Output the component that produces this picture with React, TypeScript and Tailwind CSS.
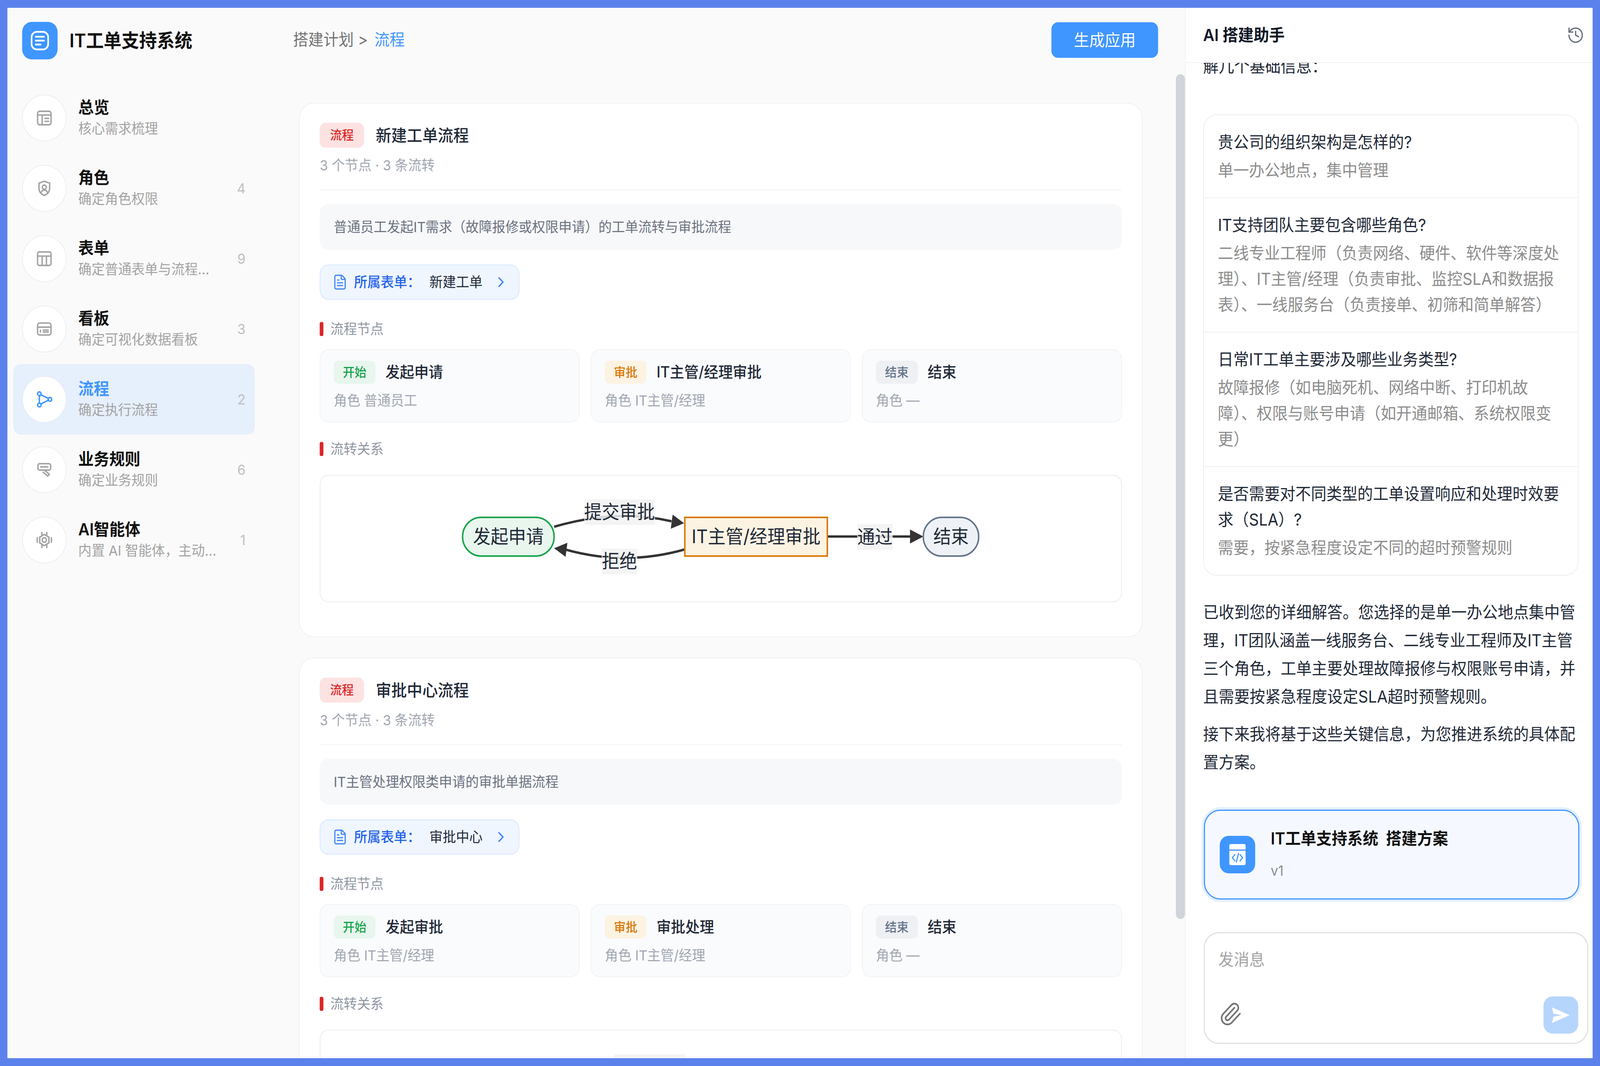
import React from "react";
import { ChevronRight, FileText, History, Paperclip } from "lucide-react";

const stroke = { fill: "none", stroke: "currentColor", strokeWidth: 2, strokeLinecap: "round" as const, strokeLinejoin: "round" as const };

function IconOverview() {
  return (
    <svg width="46" height="46" viewBox="0 0 24 24" {...stroke}>
      <rect x="2.500" y="3" width="19" height="18" rx="3" />
      <path d="M2.500 8h19M9 8v13M13 12.500h5M13 16.500h5" />
    </svg>
  );
}
function IconRole() {
  return (
    <svg width="46" height="46" viewBox="0 0 24 24" {...stroke}>
      <path d="M12 2.500l7.500 2.600v7c0 4.400-3.200 7.600-7.500 9.400-4.300-1.800-7.500-5-7.500-9.400v-7L12 2.500z" />
      <circle cx="12" cy="10.500" r="2.800" />
      <path d="M7.600 17.400c.8-2 2.400-3.200 4.400-3.200s3.600 1.200 4.400 3.200" />
    </svg>
  );
}
function IconForm() {
  return (
    <svg width="46" height="46" viewBox="0 0 24 24" {...stroke}>
      <rect x="2.500" y="3" width="19" height="18" rx="2.500" />
      <path d="M2.500 8.500h19M9 8.500V21M15 8.500V21" />
    </svg>
  );
}
function IconBoard() {
  return (
    <svg width="46" height="46" viewBox="0 0 24 24" {...stroke}>
      <rect x="2.500" y="4" width="19" height="16" rx="3" />
      <path d="M2.500 9.500h19M6.500 13.500v2.500M10.500 13.500h7M10.500 16h7" />
    </svg>
  );
}
function IconFlow() {
  return (
    <svg width="46" height="46" viewBox="0 0 24 24" {...stroke}>
      <circle cx="5" cy="4.500" r="2.500" />
      <circle cx="5" cy="19.500" r="2.500" />
      <circle cx="20" cy="12" r="2.500" />
      <path d="M5 7v10M7.200 5.800l10.500 5M7.200 18.200l10.500-5" />
    </svg>
  );
}
function IconRule() {
  return (
    <svg width="46" height="46" viewBox="0 0 24 24" {...stroke}>
      <rect x="3" y="4" width="18" height="8.500" rx="2.500" />
      <path d="M7 8.200h10M12 12.500l7 5.500-2 2.500-6.500-5" />
    </svg>
  );
}
function IconAgent() {
  return (
    <svg width="46" height="46" viewBox="0 0 24 24" {...stroke}>
      <path d="M12 4.500l6.500 3.700v7.600L12 19.500l-6.500-3.700V8.200L12 4.500z" />
      <circle cx="12" cy="12" r="3" />
      <path d="M8.500 2v3M15.500 2v3M8.500 19v3M15.500 19v3M2 9v6M22 9v6" />
    </svg>
  );
}

const navItems = [
  { title: "总览", sub: "核心需求梳理", count: "", Icon: IconOverview },
  { title: "角色", sub: "确定角色权限", count: "4", Icon: IconRole },
  { title: "表单", sub: "确定普通表单与流程...", count: "9", Icon: IconForm },
  { title: "看板", sub: "确定可视化数据看板", count: "3", Icon: IconBoard },
  { title: "流程", sub: "确定执行流程", count: "2", Icon: IconFlow, active: true },
  { title: "业务规则", sub: "确定业务规则", count: "6", Icon: IconRule },
  { title: "AI智能体", sub: "内置 AI 智能体，主动...", count: "1", Icon: IconAgent },
];

function NavItem({ item }: { item: (typeof navItems)[number] }) {
  const Icon = item.Icon;
  return (
    <div className={`flex h-[180px] items-center rounded-[20px] pl-[24px] pr-[25px] ${item.active ? "bg-[#e6effc]" : ""}`}>
      <div className={`flex h-[120px] w-[120px] shrink-0 items-center justify-center rounded-full border-2 bg-white ${item.active ? "border-[#e8edf4] text-[#4096ff]" : "border-[#eeeeee] text-[#a3a3a3]"}`}>
        <Icon />
      </div>
      <div className="ml-[32px] w-[400px]">
        <div className={`text-[42px] font-semibold leading-[54px] ${item.active ? "text-[#4096ff]" : "text-[#111111]"}`}>{item.title}</div>
        <div className="whitespace-nowrap text-[36px] leading-[54px] text-[#a3a3a3]">{item.sub}</div>
      </div>
      <div className="ml-auto text-[36px] leading-[54px] text-[#bfbfbf]">{item.count}</div>
    </div>
  );
}

function FlowDiagram({ start, mid, x0, rectW }: { start: string; mid: string; x0: number; rectW: number }) {
  const s = x0 + 248;
  const r0 = s + 354;
  const r1 = r0 + rectW;
  const e0 = r1 + 260;
  const cx = s + 177;
  const edge = "#333333";
  const label = "#f2f2f2";
  const ink = "#1f2937";
  return (
    <svg width="2170" height="322" viewBox="0 0 2170 322" className="block">
      <path d={`M${s} 131 Q${s + 170} 84 ${s + 318} 117`} fill="none" stroke={edge} strokeWidth="6" />
      <polygon points={`${s + 352},122 ${s + 321},100 ${s + 316},136`} fill={edge} />
      <path d={`M${r0} 189 Q${r0 - 160} 232 ${s + 33} 190`} fill="none" stroke={edge} strokeWidth="6" />
      <polygon points={`${s},186 ${s + 36},172 ${s + 31},208`} fill={edge} />
      <path d={`M${r1} 156 H${e0 - 32}`} fill="none" stroke={edge} strokeWidth="6" />
      <polygon points={`${e0},156 ${e0 - 36},138 ${e0 - 36},174`} fill={edge} />

      <rect x={x0} y="107" width="248" height="99" rx="50" fill="#e8f6ee" stroke="#16a34a" strokeWidth="4" />
      <rect x={r0} y="107" width={rectW} height="99" fill="#fdf3e3" stroke="#d97706" strokeWidth="4" />
      <rect x={e0} y="107" width="150" height="99" rx="50" fill="#eef2f7" stroke="#64748b" strokeWidth="4" />

      <rect x={cx - 95} y="61" width="191" height="65" fill={label} fillOpacity="0.85" />
      <rect x={cx - 48} y="187" width="96" height="65" fill={label} fillOpacity="0.85" />
      <rect x={r1 + 81} y="124" width="96" height="66" fill={label} fillOpacity="0.85" />

      <g fill={ink} fontSize="48" textAnchor="middle" dominantBaseline="central">
        <text x={x0 + 124} y="156">{start}</text>
        <text x={r0 + rectW / 2} y="156">{mid}</text>
        <text x={e0 + 75} y="156">结束</text>
        <text x={cx} y="93">提交审批</text>
        <text x={cx} y="219">拒绝</text>
        <text x={r1 + 129} y="157">通过</text>
      </g>
    </svg>
  );
}

/* The second card's diagram lies below the fold: only the top of its first edge label shows. */
function FoldedDiagram() {
  return (
    <svg width="2170" height="322" viewBox="0 0 2170 322" className="block">
      <rect x="796" y="61" width="191" height="65" fill="#f2f2f2" fillOpacity="0.85" />
    </svg>
  );
}

function SectionTitle({ children }: { children: React.ReactNode }) {
  return (
    <div className="flex h-[54px] items-center">
      <span className="h-[36px] w-[10px] rounded-[4px] bg-[#dc2626]" />
      <span className="ml-[19px] text-[36px] leading-[54px] text-[#8f96a3]">{children}</span>
    </div>
  );
}

type NodeInfo = { tag: string; tagCls: string; name: string; role: string };
const tagStart = "bg-[#e8f6ee] text-[#16a34a]";
const tagAudit = "bg-[#fdf3e3] text-[#d97706]";
const tagEnd = "bg-[#eef0f4] text-[#64748b]";

function NodeCard({ n }: { n: NodeInfo }) {
  return (
    <div className="h-[187px] rounded-[24px] border-2 border-[#f0f2f5] bg-[#fafbfc] pl-[36px] pt-[27px]">
      <div className="flex items-center">
        <span className={`flex h-[59px] w-[113px] items-center justify-center rounded-[14px] text-[32px] font-medium ${n.tagCls}`}>{n.tag}</span>
        <span className="ml-[27px] text-[39px] font-medium text-[#1f2937]">{n.name}</span>
      </div>
      <div className="mt-[16px] text-[36px] leading-[54px] text-[#a0a6b1]">角色 {n.role}</div>
    </div>
  );
}

type CardProps = { title: string; desc: string; form: string; nodes: NodeInfo[]; diagram: React.ReactNode };

function FlowCard({ title, desc, form, nodes, diagram }: CardProps) {
  return (
    <div className="rounded-[40px] border-2 border-[#f0f0f0] bg-white px-[54px] pb-[88px] pt-[49px]">
      <div className="flex h-[64px] items-center">
        <span className="flex h-[64px] w-[120px] items-center justify-center rounded-[16px] bg-[#fde2e2] text-[32px] font-medium text-[#dc2626]">流程</span>
        <span className="ml-[32px] text-[42px] font-medium text-[#1f2937]">{title}</span>
      </div>
      <div className="mt-[18px] border-b-2 border-[#f2f2f2] pb-[35px] text-[36px] leading-[54px] text-[#a0a6b1]">3 个节点 · 3 条流转</div>
      <div className="mt-[35px] flex h-[117px] items-center rounded-[24px] bg-[#f7f8fa] pl-[38px] text-[36px] text-[#6b7280]">{desc}</div>
      <div className="mt-[38px] flex h-[90px] w-[541px] items-center rounded-[24px] border-2 border-[#d6e6ff] bg-[#eff6ff] pl-[32px]">
        <FileText size={42} strokeWidth={1.7} className="text-[#3b82f6]" />
        <span className="ml-[17px] w-[180px] text-[36px] font-medium text-[#2563eb]">所属表单：</span>
        <span className="ml-[24px] w-[150px] whitespace-nowrap text-[36px] text-[#1f2937]">{form}</span>
        <ChevronRight size={44} strokeWidth={1.8} className="ml-[22px] text-[#3b82f6]" />
      </div>
      <div className="mt-[48px]">
        <SectionTitle>流程节点</SectionTitle>
      </div>
      <div className="mt-[25px] grid grid-cols-3 gap-[30px]">
        {nodes.map((n) => (
          <NodeCard key={n.tag} n={n} />
        ))}
      </div>
      <div className="mt-[41px]">
        <SectionTitle>流转关系</SectionTitle>
      </div>
      <div className="mt-[39px] h-[326px] rounded-[24px] border-2 border-[#ececf0] bg-white">{diagram}</div>
    </div>
  );
}

const qa = [
  { q: "贵公司的组织架构是怎样的?", a: "单一办公地点，集中管理" },
  { q: "IT支持团队主要包含哪些角色?", a: "二线专业工程师（负责网络、硬件、软件等深度处理）、IT主管/经理（负责审批、监控SLA和数据报表）、一线服务台（负责接单、初筛和简单解答）" },
  { q: "日常IT工单主要涉及哪些业务类型?", a: "故障报修（如电脑死机、网络中断、打印机故障）、权限与账号申请（如开通邮箱、系统权限变更）" },
  { q: "是否需要对不同类型的工单设置响应和处理时效要求（SLA）?", a: "需要，按紧急程度设定不同的超时预警规则" },
];

export default function App() {
  // The window may come out narrower than the 4334px design: fit the design to its real width.
  const fit = document.documentElement.clientWidth / 4334;
  const n1: NodeInfo[] = [
    { tag: "开始", tagCls: tagStart, name: "发起申请", role: "普通员工" },
    { tag: "审批", tagCls: tagAudit, name: "IT主管/经理审批", role: "IT主管/经理" },
    { tag: "结束", tagCls: tagEnd, name: "结束", role: "—" },
  ];
  const n2: NodeInfo[] = [
    { tag: "开始", tagCls: tagStart, name: "发起审批", role: "IT主管/经理" },
    { tag: "审批", tagCls: tagAudit, name: "审批处理", role: "IT主管/经理" },
    { tag: "结束", tagCls: tagEnd, name: "结束", role: "—" },
  ];
  return (
    <div className="h-screen w-screen overflow-hidden bg-[#5b82ec]">
      <div className="h-[2728px] w-[4334px] origin-top-left overflow-hidden bg-[#5b82ec] p-[20px] font-['Inter','Noto_Sans_CJK_SC',sans-serif]" style={{ transform: `scaleX(${fit})` }}>
        <div className="flex h-full w-full overflow-hidden bg-[#fafafa]">
          <aside className="w-[750px] shrink-0">
            <div className="flex h-[192px] items-start pl-[40px] pt-[36px]">
              <div className="flex h-[96px] w-[96px] items-center justify-center rounded-[26px] bg-[#4096ff]">
                <svg width="50" height="50" viewBox="0 0 50 50" fill="none" stroke="white" strokeLinecap="round">
                  <rect x="2.500" y="2.500" width="45" height="45" rx="14" strokeWidth="4.500" />
                  <path d="M14 15h22M14 25h22M14 35h13" strokeWidth="4.500" />
                </svg>
              </div>
              <div className="ml-[32px] text-[48px] font-semibold leading-[96px] text-[#111111]">IT工单支持系统</div>
            </div>
            <nav className="ml-[16px] w-[654px]">
              {navItems.map((item) => (
                <NavItem key={item.title} item={item} />
              ))}
            </nav>
          </aside>

          <main className="relative flex w-[2440px] shrink-0 flex-col overflow-hidden">
            <header className="flex h-[164px] shrink-0 items-center justify-between pl-[24px] pr-[73px]">
              <div className="text-[41px] text-[#737373]">
                搭建计划 &gt; <span className="ml-[6px] text-[#4096ff]">流程</span>
              </div>
              <button className="h-[91px] w-[289px] rounded-[18px] bg-[#4096ff] text-[42px] text-white">生成应用</button>
            </header>
            <div className="flex flex-1 flex-col gap-[52px] overflow-hidden pl-[40px] pr-[115px] pt-[79px]">
              <FlowCard title="新建工单流程" desc="普通员工发起IT需求（故障报修或权限申请）的工单流转与审批流程" form="新建工单" nodes={n1} diagram={<FlowDiagram start="发起申请" mid="IT主管/经理审批" x0={385} rectW={386} />} />
              <FlowCard title="审批中心流程" desc="IT主管处理权限类申请的审批单据流程" form="审批中心" nodes={n2} diagram={<FoldedDiagram />} />
            </div>
            <div className="absolute right-0 top-[170px] h-[2162px] w-[25px] rounded-full bg-[#d1d5db]" />
          </main>

          <section className="flex min-w-0 flex-1 flex-col border-l-2 border-[#f0f0f0] bg-white">
            <header className="flex h-[141px] shrink-0 items-center justify-between border-b-2 border-[#f0f0f0] pl-[47px] pr-[22px]">
              <span className="text-[42px] font-semibold text-[#111827]">AI 搭建助手</span>
              <History size={48} strokeWidth={1.7} className="text-[#6b7280]" />
            </header>
            <div className="min-h-0 flex-1 overflow-hidden pl-[47px] pr-[38px]">
              <div className="-mt-[27px] text-[42px] leading-[72px] text-[#1f2937]">
                <p>解几个基础信息：</p>
                <div className="mt-[87px] overflow-hidden rounded-[36px] border-2 border-[#eeeef2] bg-white">
                  {qa.map((r, i) => (
                    <div key={r.q} className={`px-[38px] py-[36px] leading-[66px] ${i > 0 ? "border-t-2 border-[#f0f0f0]" : ""}`}>
                      <div className="text-[#1f2937]">{r.q}</div>
                      <div className="mt-[6px] text-[#8c8c8c]">{r.a}</div>
                    </div>
                  ))}
                </div>
                <p className="mt-[58px]">已收到您的详细解答。您选择的是单一办公地点集中管理，IT团队涵盖一线服务台、二线专业工程师及IT主管三个角色，工单主要处理故障报修与权限账号申请，并且需要按紧急程度设定SLA超时预警规则。</p>
                <p className="mt-[24px]">接下来我将基于这些关键信息，为您推进系统的具体配置方案。</p>
                <div className="-mr-[2px] ml-[2px] mt-[85px] flex h-[230px] items-center rounded-[44px] border-[3px] border-[#4096ff] bg-[#f5f9ff] pl-[40px] shadow-[0_0_0_6px_#e3eeff]">
                  <div className="flex h-[96px] w-[96px] shrink-0 items-center justify-center rounded-[24px] bg-[#4096ff]">
                    <svg width="56" height="56" viewBox="0 0 56 56" fill="none">
                      <path d="M6 5a4 4 0 0 1 4-4h36a4 4 0 0 1 4 4v10H6V5z" fill="white" />
                      <path d="M6 18h44v33a4 4 0 0 1-4 4H10a4 4 0 0 1-4-4V18z" fill="white" />
                      <path d="M21 28l-7 8 7 8M35 28l7 8-7 8M31 25l-6 22" stroke="#4096ff" strokeWidth="3" strokeLinecap="round" strokeLinejoin="round" />
                    </svg>
                  </div>
                  <div className="ml-[42px]">
                    <div className="whitespace-pre text-[42px] font-semibold leading-[60px] text-[#111111]">IT工单支持系统  搭建方案</div>
                    <div className="mt-[22px] text-[36px] leading-[60px] text-[#8c8c8c]">v1</div>
                  </div>
                </div>
              </div>
            </div>
            <div className="shrink-0 pb-[37px] pl-[49px] pr-[12px]">
              <div className="relative h-[285px] rounded-[40px] border-2 border-[#d4d4d4] bg-white pl-[37px] pt-[33px]">
                <div className="text-[42px] leading-[70px] text-[#a3a3a3]">发消息</div>
                <Paperclip size={64} strokeWidth={1.6} className="absolute bottom-[42px] left-[38px] text-[#737373]" />
                <button className="absolute bottom-[24px] right-[25px] flex h-[95px] w-[94px] items-center justify-center rounded-[24px] bg-[#b6d5fd]">
                  <svg width="50" height="42" viewBox="0 0 50 42">
                    <path d="M1 1l48 20L1 41l4-16 22-4-22-4L1 1z" fill="white" />
                  </svg>
                </button>
              </div>
            </div>
          </section>
        </div>
      </div>
    </div>
  );
}
